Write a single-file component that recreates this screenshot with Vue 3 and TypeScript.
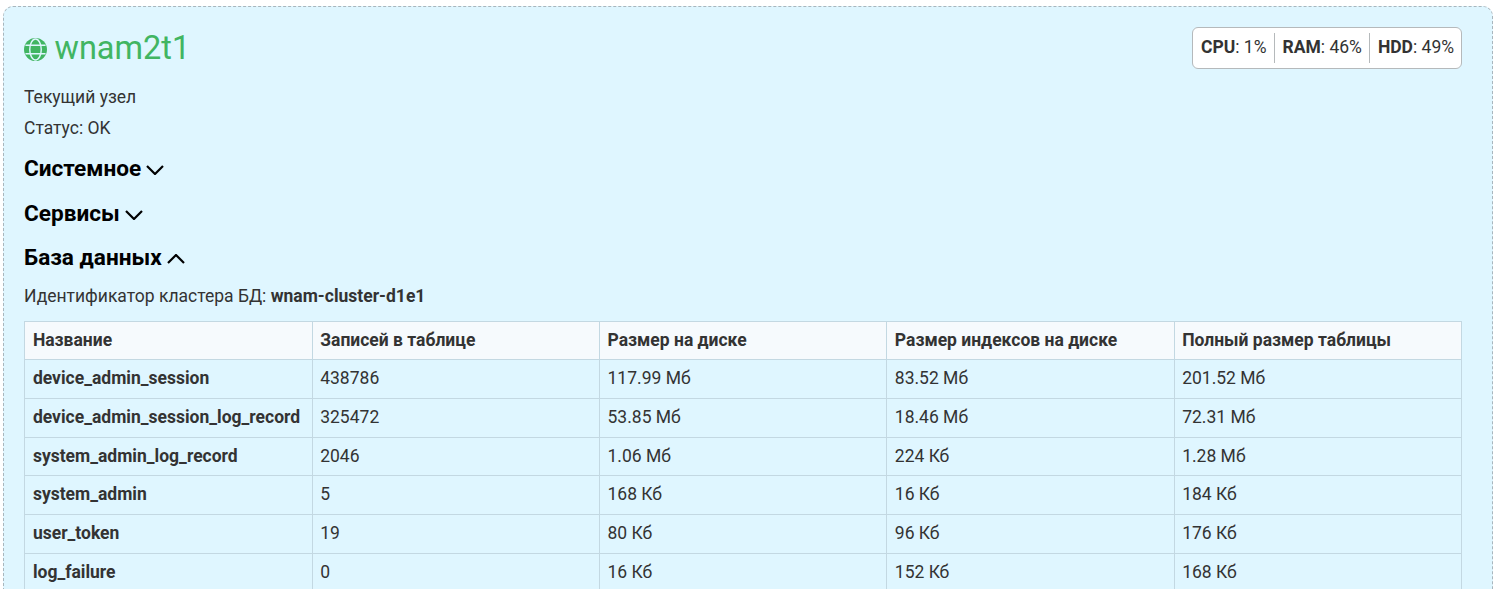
<script setup lang="ts">
const headers: string[] = ['Название', 'Записей в таблице', 'Размер на диске', 'Размер индексов на диске', 'Полный размер таблицы']
const rows: string[][] = [
  ['device_admin_session', '438786', '117.99 Мб', '83.52 Мб', '201.52 Мб'],
  ['device_admin_session_log_record', '325472', '53.85 Мб', '18.46 Мб', '72.31 Мб'],
  ['system_admin_log_record', '2046', '1.06 Мб', '224 Кб', '1.28 Мб'],
  ['system_admin', '5', '168 Кб', '16 Кб', '184 Кб'],
  ['user_token', '19', '80 Кб', '96 Кб', '176 Кб'],
  ['log_failure', '0', '16 Кб', '152 Кб', '168 Кб'],
]
</script>

<template>
  <div class="page">
    <div class="card">
      <div class="head">
        <h1 class="title">
          <svg class="globe" viewBox="0 0 24 24" width="23" height="23">
            <circle cx="12" cy="12" r="12" fill="#41b562" />
            <g fill="none" stroke="#dff6ff" stroke-width="1.5">
              <ellipse cx="12" cy="12" rx="6" ry="11" />
              <path d="M1.5 7.6h21M1.5 16.4h21" />
            </g>
          </svg>
          <span>wnam2t1</span>
        </h1>
        <div class="stats">
          <span class="stat"><b>CPU</b>: 1%</span>
          <span class="stat"><b>RAM</b>: 46%</span>
          <span class="stat"><b>HDD</b>: 49%</span>
        </div>
      </div>
      <p class="line first">Текущий узел</p>
      <p class="line">Статус: OK</p>
      <h2 class="section">Системное
        <svg class="chev" viewBox="0 0 18 10" width="18" height="10"><path d="M1 1l8 8 8-8" /></svg>
      </h2>
      <h2 class="section">Сервисы
        <svg class="chev" viewBox="0 0 18 10" width="18" height="10"><path d="M1 1l8 8 8-8" /></svg>
      </h2>
      <h2 class="section">База данных
        <svg class="chev" viewBox="0 0 18 10" width="18" height="10"><path d="M1 9l8-8 8 8" /></svg>
      </h2>
      <p class="cluster">Идентификатор кластера БД: <b>wnam-cluster-d1e1</b></p>
      <table class="table">
        <thead>
          <tr><th v-for="h in headers" :key="h">{{ h }}</th></tr>
        </thead>
        <tbody>
          <tr v-for="r in rows" :key="r[0]">
            <td v-for="(c, i) in r" :key="i" :class="{ name: i === 0 }">{{ c }}</td>
          </tr>
        </tbody>
      </table>
    </div>
  </div>
</template>

<style>
html, body { margin: 0; height: 100%; overflow: hidden; background: #fff; }
</style>

<style scoped>
.page {
  height: 589px;
  overflow: hidden;
  padding: 6px 5px 0 3px;
  box-sizing: border-box;
  font-family: Roboto, "Liberation Sans", sans-serif;
  font-size: 17.5px;
  color: #333;
}
.card {
  background: #dff6ff;
  border: 1px dashed #a9b6bd;
  border-radius: 10px;
  padding: 20px 30px 0 20px;
  height: 800px;
  box-sizing: border-box;
}
.head { display: flex; justify-content: space-between; align-items: flex-start; }
.title {
  margin: 0;
  display: flex;
  align-items: center;
  gap: 7.5px;
  font-size: 32.5px;
  font-weight: 400;
  line-height: 42px;
  color: #41b562;
}
.globe { margin-top: 2px; }
.stats {
  display: flex;
  align-items: center;
  width: 270px;
  height: 42px;
  box-sizing: border-box;
  background: #fff;
  border: 1px solid #b5b9bb;
  border-radius: 6px;
  padding: 0 0 0 8px;
}
.stat {
  height: 30px;
  box-sizing: border-box;
  padding: 0 7px 0 8px;
  line-height: 28px;
  border-left: 1px solid #b5b9bb;
  white-space: nowrap;
}
.stat:first-child { border-left: 0; padding-left: 0; }
.stat b { font-weight: 700; }
.line { margin: 0; line-height: 31px; }
.first { margin-top: 13px; }
.section {
  margin: 0;
  font-size: 22.6px;
  font-weight: 700;
  color: #000;
  line-height: 44.5px;
  display: flex;
  align-items: center;
  gap: 5px;
}
.line + .section { margin-top: 3px; }
.chev { fill: none; stroke: #000; stroke-width: 2.2; margin-top: 2px; }
.cluster { margin: 1px 0 0; line-height: 28px; }
.cluster b { font-weight: 700; }
.table {
  margin-top: 11.1px;
  margin-left: .4px;
  width: calc(100% - .4px);
  border-collapse: collapse;
  table-layout: fixed;
}
th, td {
  border: 1px solid #c3d8e2;
  padding: 6px 7.5px;
  line-height: 25.7px;
  text-align: left;
  white-space: nowrap;
}
th { background: #f6fafd; font-weight: 700; }
td.name { font-weight: 700; }
</style>
